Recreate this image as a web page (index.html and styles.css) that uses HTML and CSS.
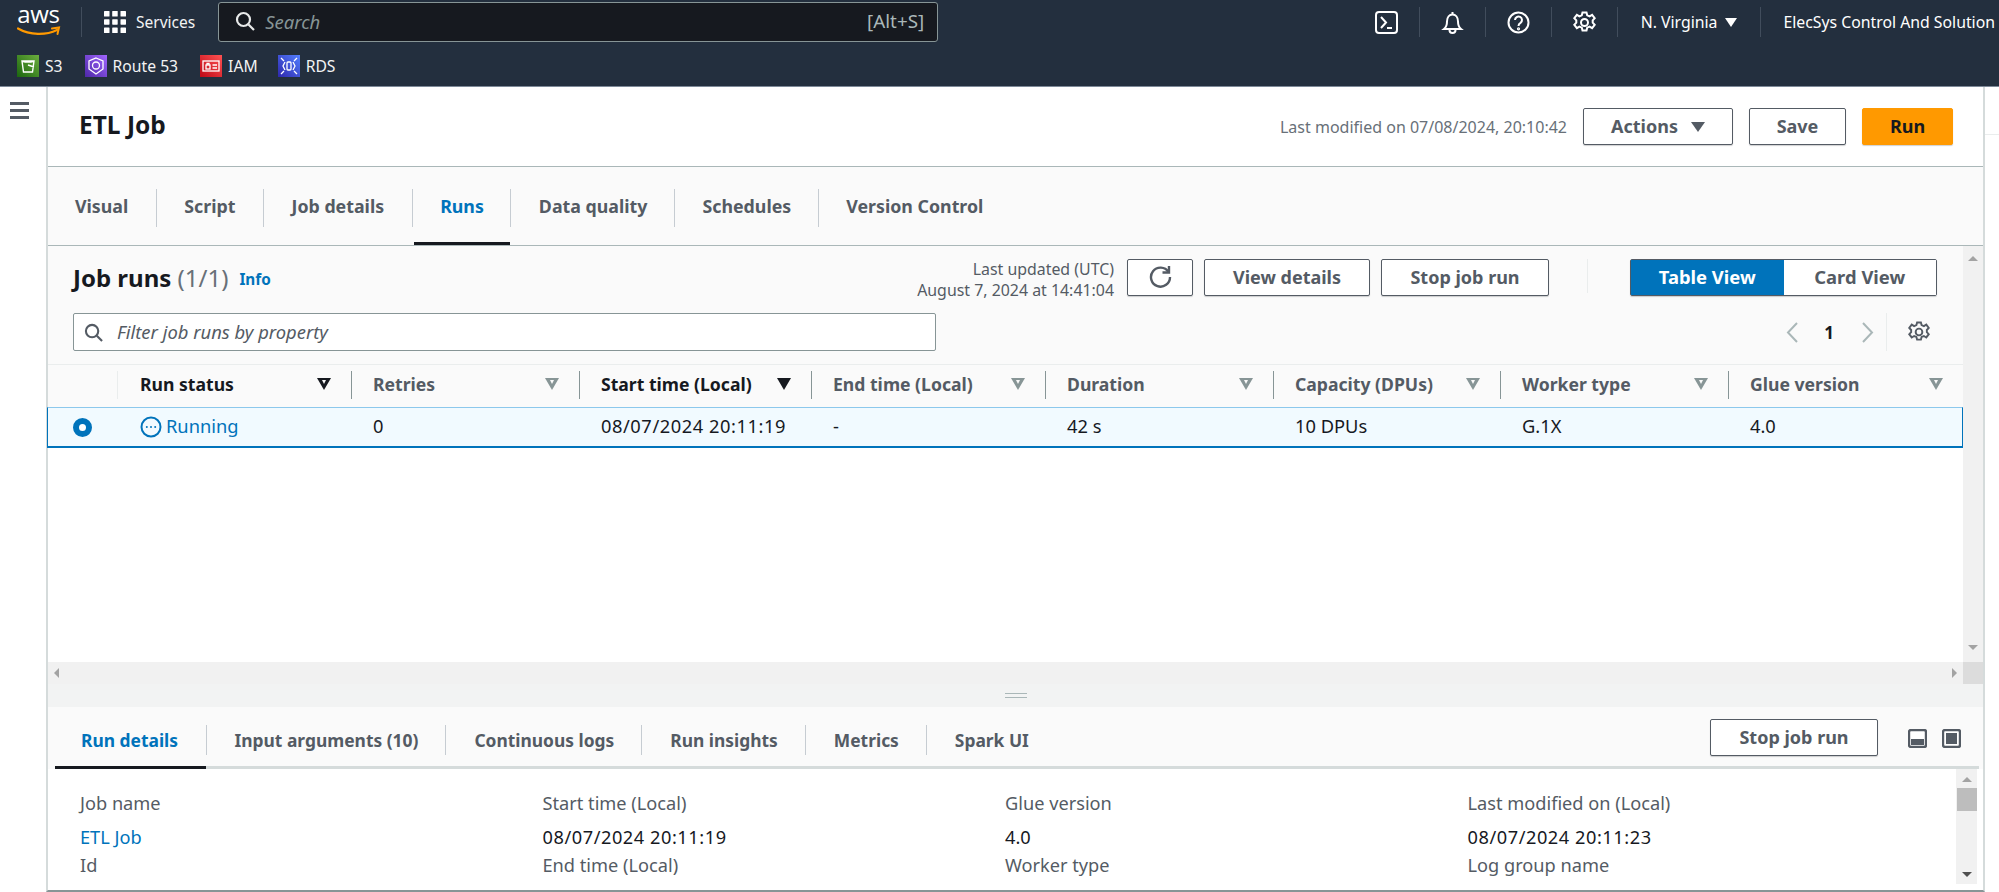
FILE: index.html
```html
<!DOCTYPE html>
<html lang="en">
<head>
<meta charset="utf-8">
<title>ETL Job</title>
<link rel="stylesheet" href="styles.css">
</head>
<body>
<header class="nav">
  <div class="nav-top">
    <div class="logo"><span class="logo-text">aws</span>
      <svg class="logo-smile" width="44" height="12" viewBox="0 0 44 12"><path d="M1 2.5C13 9.5 29 9.5 40 4" fill="none" stroke="#f90" stroke-width="2.2" stroke-linecap="round"/><path d="M35 2.5L42 1.5L40.5 8" fill="none" stroke="#f90" stroke-width="2" stroke-linecap="round"/></svg>
    </div>
    <span class="nav-sep nav-sep-logo"></span>
    <svg class="grid-icon" width="22" height="22" viewBox="0 0 22 22" fill="#fff"><rect width="5.5" height="5.5" rx=".6"/><rect x="8.2" width="5.5" height="5.5" rx=".6"/><rect x="16.5" width="5.5" height="5.5" rx=".6"/><rect y="8.2" width="5.5" height="5.5" rx=".6"/><rect x="8.2" y="8.2" width="5.5" height="5.5" rx=".6"/><rect x="16.5" y="8.2" width="5.5" height="5.5" rx=".6"/><rect y="16.5" width="5.5" height="5.5" rx=".6"/><rect x="8.2" y="16.5" width="5.5" height="5.5" rx=".6"/><rect x="16.5" y="16.5" width="5.5" height="5.5" rx=".6"/></svg>
    <span class="services">Services</span>
    <div class="search">
      <svg width="20" height="20" viewBox="0 0 20 20" fill="none" stroke="#e8eaea" stroke-width="2.2"><circle cx="8.5" cy="8.5" r="6.5"/><path d="M13.5 13.5L19 19"/></svg>
      <span class="search-text">Search</span>
      <span class="search-key">[Alt+S]</span>
    </div>
    <div class="nav-right">
      <svg class="ni ni-term" width="23" height="23" viewBox="0 0 23 23" fill="none" stroke="#fff" stroke-width="2"><rect x="1" y="1" width="21" height="21" rx="3"/><path d="M6 6l5 5.5-5 5.5M12 17h5"/></svg>
      <span class="nav-sep"></span>
      <svg class="ni" width="23" height="23" viewBox="0 0 23 23" fill="none" stroke="#fff" stroke-width="2"><path d="M3 18c2.5-2 3-4 3-7.500C6 6 8.500 3.500 11.500 3.500S17 6 17 10.500c0 3.500.5 5.500 3 7.500z"/><path d="M11.500 1v2.500M8.500 19a3 3 0 0 0 6 0"/></svg>
      <span class="nav-sep"></span>
      <svg class="ni" width="23" height="23" viewBox="0 0 23 23" fill="none" stroke="#fff" stroke-width="2"><circle cx="11.500" cy="11.500" r="10"/><path d="M8 9a3.500 3.500 0 1 1 5.500 2.900c-1.300.8-2 1.300-2 3"/><circle cx="11.500" cy="17.800" r=".6"/></svg>
      <span class="nav-sep"></span>
      <svg class="ni" width="23" height="23" viewBox="0 0 23 23" fill="none" stroke="#fff" stroke-width="2"><path d="M9.500 1.500h4l.7 2.800 2.400 1 2.500-1.500 2.600 3.400-2 2.200v2.200l2 2.200-2.600 3.400-2.500-1.500-2.400 1-.7 2.800h-4l-.7-2.800-2.400-1-2.500 1.500-2.600-3.400 2-2.200V9.400l-2-2.200 2.600-3.400 2.500 1.500 2.400-1z"/><circle cx="11.500" cy="11.500" r="3.500"/></svg>
      <span class="nav-sep"></span>
      <span class="region">N. Virginia</span><span class="caret-w"></span>
      <span class="nav-sep"></span>
      <span class="account">ElecSys Control And Solution</span>
    </div>
  </div>
  <div class="nav-bookmarks">
    <span class="bm"><svg class="bm-ic bm-g" viewBox="0 0 22 22" fill="none" stroke="#fff" stroke-width="1.400"><path d="M5 6h12l-1.500 11h-9zM5 6c0 1.500 12 1.500 12 0M11 10l6 2"/></svg>S3</span>
    <span class="bm"><svg class="bm-ic bm-p" viewBox="0 0 22 22" fill="none" stroke="#fff" stroke-width="1.300"><path d="M11 3l7 3v8l-7 5-7-5V6z"/><circle cx="11" cy="10.500" r="3.500"/></svg>Route 53</span>
    <span class="bm bm-tight"><svg class="bm-ic bm-r" viewBox="0 0 22 22" fill="none" stroke="#fff" stroke-width="1.300"><rect x="3" y="6" width="16" height="10"/><rect x="6" y="10" width="4" height="4"/><path d="M7 10V8.500h2V10M12.500 10H17M12.500 13H17"/></svg>IAM</span>
    <span class="bm"><svg class="bm-ic bm-b" viewBox="0 0 22 22" fill="none" stroke="#fff" stroke-width="1.300"><rect x="9" y="7" width="4" height="8" rx="1"/><path d="M7 7l-2 4 2 4M15 7l2 4-2 4M3 3l3 3M19 3l-3 3M3 19l3-3M19 19l-3-3"/></svg>RDS</span>
  </div>
</header>

<div class="shell">
  <aside class="side">
    <div class="burger"><i></i><i></i><i></i></div>
  </aside>
  <main class="panel">
    <div class="head">
      <h1>ETL Job</h1>
      <span class="modified">Last modified on 07/08/2024, 20:10:42</span>
      <button class="btn btn-actions">Actions<span class="caret-d"></span></button>
      <button class="btn btn-save">Save</button>
      <button class="btn btn-run">Run</button>
    </div>
    <nav class="tabs">
      <span class="tab">Visual</span>
      <span class="tab">Script</span>
      <span class="tab">Job details</span>
      <span class="tab tab-on">Runs</span>
      <span class="tab">Data quality</span>
      <span class="tab">Schedules</span>
      <span class="tab tab-last">Version Control</span>
    </nav>
    <div class="runs-wrap">
      <section class="runs">
        <div class="runs-head">
          <h2>Job runs <span class="count">(1/1)</span></h2>
          <a class="info">Info</a>
          <div class="updated">Last updated (UTC)<br>August 7, 2024 at 14:41:04</div>
          <button class="btn btn-refresh"><svg width="25" height="25" viewBox="0 0 25 25" fill="none" stroke="#545b64" stroke-width="2.400"><path d="M20.500 8A9.500 9.500 0 1 0 22 13"/><path d="M21 2v6.500h-6.500"/></svg></button>
          <button class="btn btn-view">View details</button>
          <button class="btn btn-stop">Stop job run</button>
          <span class="vsep"></span>
          <div class="seg"><span class="seg-on">Table View</span><span class="seg-off">Card View</span></div>
        </div>
        <div class="filter-row">
          <div class="filter">
            <svg width="19" height="19" viewBox="0 0 20 20" fill="none" stroke="#545b64" stroke-width="2.200"><circle cx="8.500" cy="8.500" r="6.500"/><path d="M13.500 13.500L19 19"/></svg>
            <span>Filter job runs by property</span>
          </div>
          <div class="pager">
            <svg width="13" height="23" viewBox="0 0 13 23" fill="none" stroke="#aab7b8" stroke-width="2"><path d="M11 2L2 11.500 11 21"/></svg>
            <b>1</b>
            <svg width="13" height="23" viewBox="0 0 13 23" fill="none" stroke="#aab7b8" stroke-width="2"><path d="M2 2l9 9.500L2 21"/></svg>
            <span class="pager-sep"></span>
            <svg width="22" height="24" viewBox="0 0 23 23" fill="none" stroke="#545b64" stroke-width="2"><path d="M9.500 1.500h4l.7 2.800 2.400 1 2.500-1.500 2.600 3.400-2 2.200v2.200l2 2.200-2.600 3.400-2.500-1.500-2.400 1-.7 2.800h-4l-.7-2.800-2.400-1-2.500 1.500-2.600-3.400 2-2.200V9.400l-2-2.200 2.600-3.400 2.500 1.500 2.400-1z"/><circle cx="11.500" cy="11.500" r="3.500"/></svg>
          </div>
        </div>
        <div class="thead">
          <div class="th th-sel"></div>
          <div class="th th-strong th-run">Run status<span class="sort sort-d"></span></div>
          <div class="th">Retries<span class="sort"></span></div>
          <div class="th th-strong">Start time (Local)<span class="sort sort-f"></span></div>
          <div class="th">End time (Local)<span class="sort"></span></div>
          <div class="th">Duration<span class="sort"></span></div>
          <div class="th">Capacity (DPUs)<span class="sort"></span></div>
          <div class="th">Worker type<span class="sort"></span></div>
          <div class="th th-end">Glue version<span class="sort"></span></div>
        </div>
        <div class="trow">
          <div class="td td-sel"><span class="radio"></span></div>
          <div class="td td-status"><svg width="22" height="22" viewBox="0 0 22 22" fill="none" stroke="#0073bb" stroke-width="2"><circle cx="11" cy="11" r="9.500"/><circle cx="6.800" cy="11" r="1" fill="#0073bb" stroke="none"/><circle cx="11" cy="11" r="1" fill="#0073bb" stroke="none"/><circle cx="15.200" cy="11" r="1" fill="#0073bb" stroke="none"/></svg>Running</div>
          <div class="td">0</div>
          <div class="td td-date">08/07/2024 20:11:19</div>
          <div class="td">-</div>
          <div class="td">42 s</div>
          <div class="td">10 DPUs</div>
          <div class="td">G.1X</div>
          <div class="td">4.0</div>
        </div>
        <div class="tblank"></div>
        <div class="hscroll"><span class="arr-l"></span><span class="arr-r"></span></div>
      </section>
      <div class="vscroll"><span class="arr-u"></span><span class="vfill"></span><span class="arr-dn"></span><span class="corner"></span></div>
    </div>
    <div class="splitter"><i></i><i></i></div>
    <div class="btabs">
      <span class="btab btab-on">Run details</span>
      <span class="btab">Input arguments (10)</span>
      <span class="btab">Continuous logs</span>
      <span class="btab">Run insights</span>
      <span class="btab">Metrics</span>
      <span class="btab btab-last">Spark UI</span>
      <button class="btn btn-stop2">Stop job run</button>
      <svg class="pane-ic" width="19" height="19" viewBox="0 0 19 19"><rect x="1" y="1" width="17" height="17" rx="2" fill="#fff" stroke="#545b64" stroke-width="2.400"/><rect x="3" y="10" width="13" height="6" fill="#545b64"/></svg>
      <svg class="pane-ic pane-ic2" width="19" height="19" viewBox="0 0 19 19"><rect x="1" y="1" width="17" height="17" rx="2" fill="#fff" stroke="#545b64" stroke-width="2.400"/><rect x="4" y="4" width="11" height="11" fill="#545b64"/></svg>
    </div>
    <div class="details">
      <div class="dgrid">
        <div class="dl">Job name</div><div class="dl">Start time (Local)</div><div class="dl">Glue version</div><div class="dl">Last modified on (Local)</div>
        <a class="dv dv-link">ETL Job</a><div class="dv dv-date">08/07/2024 20:11:19</div><div class="dv">4.0</div><div class="dv dv-date">08/07/2024 20:11:23</div>
        <div class="dl">Id</div><div class="dl">End time (Local)</div><div class="dl">Worker type</div><div class="dl">Log group name</div>
      </div>
      <div class="dscroll"><span class="arr-u"></span><span class="dthumb"></span><span class="dtrack"></span><span class="arr-dn arr-dk"></span></div>
    </div>
  </main>
  <div class="rail"><div class="rail-top"></div></div>
</div>
</body>
</html>
```
FILE: styles.css
```css
* { box-sizing: border-box; }
html, body { margin: 0; padding: 0; }
body {
  width: 1999px; height: 892px; overflow: hidden; background: #fff;
  font-family: "Noto Sans", "Open Sans", sans-serif; font-size: 18px; color: #16191f;
  display: flex; flex-direction: column;
}
button { font-family: inherit; cursor: pointer; }
h1, h2 { margin: 0; }

/* top nav */
.nav { height: 87px; background: #232f3e; border-bottom: 1px solid #7d8998; color: #fff; flex: none; }
.nav-top { height: 44px; display: flex; align-items: center; padding-left: 17px; }
.logo { width: 43px; height: 30px; display: flex; flex-direction: column; align-items: center; margin-top: -8px; }
.logo-text { font-family: "Open Sans", sans-serif; font-size: 24px; line-height: 22px; letter-spacing: -.3px; }
.logo-smile { margin-top: 1px; flex: none; }
.nav-sep { width: 1px; height: 30px; background: #414d5c; flex: none; }
.nav-sep-logo { margin-left: 21px; margin-right: 22px; }
.grid-icon { flex: none; }
.services { margin-left: 10px; font-size: 15.500px; color: #f2f3f3; }
.search {
  margin-left: 23px; width: 720px; height: 40px; background: #16191f; border: 1px solid #879596; border-radius: 3px;
  display: flex; align-items: center; padding: 0 13px 2px 16px; font-size: 18.500px;
}
.search-text { margin-left: 10px; font-style: italic; color: #879596; flex: 1; }
.search-key { color: #aab7b8; font-size: 18.800px; }
.nav-right { margin-left: auto; display: flex; align-items: center; font-size: 15.800px; padding-right: 4px; }
.ni { margin: 0 21px 0 21px; flex: none; }
.ni-term { margin-left: 0; }
.region { margin-left: 23px; white-space: nowrap; }
.caret-w { width: 0; height: 0; margin: 0 23px 0 8px; border-left: 6px solid transparent; border-right: 6px solid transparent; border-top: 9px solid #fff; }
.account { margin-left: 22px; white-space: nowrap; }
.nav-bookmarks { height: 42px; display: flex; align-items: center; padding: 2px 0 0 17px; font-size: 15.700px; color: #f2f3f3; }
.bm { display: flex; align-items: center; margin-right: 22px; }
.bm-tight { margin-right: 20px; }
.bm-ic { width: 22px; height: 22px; margin-right: 6px; flex: none; }
.bm-g { background: linear-gradient(45deg, #1b660f, #6cae3e); }
.bm-p { background: linear-gradient(45deg, #4d27a8, #a166ff); }
.bm-r { background: linear-gradient(45deg, #bd0816, #ff5252); }
.bm-b { background: linear-gradient(45deg, #2e27ad, #527fff); }

/* shell */
.shell { flex: 1; display: flex; min-height: 0; }
.side { width: 46px; flex: none; padding: 15px 0 0 10px; }
.burger i { display: block; width: 19px; height: 3px; background: #545b64; margin-bottom: 4px; }
.panel {
  width: 1939px; flex: none; display: flex; flex-direction: column; min-height: 0;
  border-left: 2px solid #d5dbdb; border-right: 2px solid #d5dbdb; border-bottom: 2px solid #879596;
}
.rail { flex: 1; }
.rail-top { height: 48px; border-bottom: 1px solid #eaeded; }

/* header */
.head { height: 80px; flex: none; display: flex; align-items: center; padding: 0 30px 0 31px; border-bottom: 1px solid #aab7b8; }
.head h1 { font-size: 24.500px; font-weight: 700; flex: none; margin-top: -4px; }
.modified { margin-left: auto; color: #687078; font-size: 16px; margin-right: 16px; white-space: nowrap; }
.btn {
  height: 37px; background: #fff; border: 1px solid #545b64; border-radius: 2px; color: #545b64;
  font-weight: 700; font-size: 18px; padding: 0 0 2px; box-shadow: 0 1px 1px #16191f33; display: inline-flex; align-items: center; justify-content: center;
}
.btn-actions { width: 150px; }
.caret-d { display: inline-block; width: 0; height: 0; margin: 2px 0 0 13px; border-left: 7px solid transparent; border-right: 7px solid transparent; border-top: 10px solid #545b64; }
.btn-save { width: 97px; margin-left: 16px; }
.btn-run { width: 91px; margin-left: 16px; background: #ff9900; border-color: #ff9900; color: #16191f; }

/* tabs */
.tabs { height: 79px; flex: none; display: flex; align-items: flex-start; background: #fafafa; border-bottom: 1px solid #aab7b8; }
.tab {
  font-weight: 700; color: #545b64; font-size: 17.800px; padding: 0 27.500px; height: 78px; line-height: 78px; position: relative; white-space: nowrap;
}
.tab:nth-child(-n+3) { padding-right: 28.500px; }
.tab::after { content: ""; position: absolute; right: 0; top: 22px; height: 38px; width: 1px; background: #c6ccd2; }
.tab:first-child { padding-left: 27px; }
.tab-last::after { display: none; }
.tab-on { color: #0073bb; }
.tab-on::before { content: ""; position: absolute; left: 1px; right: 1px; bottom: 0; height: 3px; background: #16191f; }

/* runs */
.runs-wrap { flex: 1; display: flex; min-height: 0; background: #fafafa; }
.runs { width: 1915px; flex: none; display: flex; flex-direction: column; }
.runs-head { height: 67px; flex: none; display: flex; align-items: flex-start; padding: 13px 0 0 25px; }
.runs-head h2 { font-size: 24px; font-weight: 700; white-space: nowrap; line-height: 37px; }
.count { font-weight: 400; color: #687078; }
.info { color: #0073bb; font-weight: 700; font-size: 15.300px; margin: 10px 0 0 11px; }
.updated { margin-left: auto; text-align: right; color: #545b64; font-size: 15.900px; line-height: 21px; margin-right: 13px; }
.btn-refresh { width: 66px; }
.btn-view { width: 166px; margin-left: 11px; }
.btn-stop { width: 168px; margin-left: 11px; }
.vsep { width: 1px; height: 34px; background: #eaeded; margin: 0 42px 0 38px; }
.seg { width: 307px; height: 37px; display: flex; border: 1px solid #545b64; border-radius: 2px; margin-right: 26px; font-weight: 700; font-size: 18.400px; box-shadow: 0 1px 1px #16191f33; }
.seg span { flex: 1; display: flex; align-items: center; justify-content: center; padding-bottom: 2px; }
.seg-on { background: #0073bb; color: #fff; }
.seg-off { background: #fff; color: #545b64; }
.filter-row { height: 52px; flex: none; display: flex; align-items: flex-start; padding-left: 25px; border-bottom: 1px solid #eaeded; }
.filter {
  width: 863px; height: 38px; background: #fff; border: 1px solid #879596; border-radius: 2px;
  display: flex; align-items: center; padding-left: 10px; font-style: italic; color: #545b64; font-size: 18.400px;
}
.filter span { margin: -2px 0 0 14px; }
.pager { margin-left: auto; display: flex; align-items: center; height: 38px; padding-right: 33px; }
.pager b { margin: 0 27px 0 25px; font-size: 17px; }
.pager-sep { width: 1px; height: 38px; background: #eaeded; margin: 0 21px 0 12px; }

/* table */
.thead { height: 42px; flex: none; display: grid; grid-template-columns: 70px 234px 228px 232px 234px 228px 227px 228px 234px; align-items: center; padding-bottom: 3px; }
.th {
  height: 28px; display: flex; align-items: center; justify-content: space-between; padding: 0 20px 2px 21px; font-weight: 700; color: #545b64; font-size: 17.600px; white-space: nowrap;
  border-right: 1px solid #879596;
}
.th-sel { border-right-color: #eaeded; }
.th-strong { color: #16191f; }
.th-run { padding-left: 22px; }
.th-end { border-right: 0; }
.sort { position: relative; width: 0; height: 0; border-left: 7px solid transparent; border-right: 7px solid transparent; border-top: 12px solid #879596; flex: none; }
.sort::after { content: ""; position: absolute; left: -2.500px; top: -9.500px; width: 0; height: 0; border-left: 2.500px solid transparent; border-right: 2.500px solid transparent; border-top: 4px solid #fafafa; }
.sort-d { border-top-color: #16191f; }
.sort-f { border-top-color: #16191f; border-left-width: 7.500px; border-right-width: 7.500px; }
.sort-f::after { display: none; }
.trow { height: 41px; flex: none; display: grid; grid-template-columns: 70px 234px 228px 232px 234px 228px 227px 228px 234px; align-items: center; background: #f1faff; border: 1px solid #0073bb; border-top-color: #8cc8ec; border-bottom-width: 2px; margin-left: -1px; }
.td { padding: 0 0 3px 21px; font-size: 18.300px; white-space: nowrap; }
.td-date { letter-spacing: .55px; }
.td-sel { padding: 0 0 0 25px; display: flex; }
.radio { width: 19px; height: 19px; border-radius: 50%; border: 6px solid #0073bb; background: #fff; }
.td-status { color: #0073bb; display: flex; align-items: center; gap: 4px; padding-left: 22px; }
.td-status svg { margin-top: 2px; }
.tblank { flex: 1; background: #fff; }
.hscroll { height: 22px; flex: none; background: #f1f1f1; display: flex; align-items: center; justify-content: space-between; padding: 0 6px; }
.arr-l { border-top: 5px solid transparent; border-bottom: 5px solid transparent; border-right: 5px solid #a3a3a3; }
.arr-r { border-top: 5px solid transparent; border-bottom: 5px solid transparent; border-left: 5px solid #a3a3a3; }
.vscroll { flex: 1; background: #f1f1f1; display: flex; flex-direction: column; align-items: center; padding-top: 10px; }
.vfill { flex: 1; }
.arr-u { border-left: 5px solid transparent; border-right: 5px solid transparent; border-bottom: 5px solid #a3a3a3; flex: none; }
.arr-dn { border-left: 5px solid transparent; border-right: 5px solid transparent; border-top: 5px solid #a3a3a3; flex: none; margin-bottom: 6px; }
.arr-dk { border-top-color: #505050; margin-bottom: 0; }
.corner { width: 100%; height: 22px; background: #dcdcdc; flex: none; margin-top: 6px; }

/* splitter */
.splitter { height: 23px; flex: none; background: #f2f3f3; display: flex; flex-direction: column; align-items: center; justify-content: center; gap: 3px; }
.splitter i { width: 22px; height: 1px; background: #aab7b8; display: block; }

/* bottom tabs */
.btabs { height: 62px; flex: none; display: flex; align-items: flex-start; background: #fafafa; padding-left: 7px; padding-right: 22px; position: relative; }
.btabs::after { content: ""; position: absolute; left: 7px; right: 4px; bottom: 0; height: 3px; background: #d5dbdb; }
.btab { font-weight: 700; color: #545b64; font-size: 17.400px; padding: 0 28px; height: 60px; line-height: 66px; position: relative; z-index: 1; white-space: nowrap; }
.btab::after { content: ""; position: absolute; right: 0; top: 18px; height: 30px; width: 1px; background: #c6ccd2; }
.btab-last::after { display: none; }
.btab-on { color: #0073bb; padding: 0 28.500px 0 26px; z-index: 2; height: 62px; }
.btab-on::before { content: ""; position: absolute; left: 0; right: 1px; bottom: 0; height: 3px; background: #16191f; }
.btn-stop2 { width: 168px; margin-left: auto; margin-top: 12px; }
.pane-ic { margin: 22px 0 0 30px; flex: none; }
.pane-ic2 { margin-left: 15px; }

/* details */
.details { height: 121px; flex: none; display: flex; background: #fff; min-height: 0; padding-right: 6px; }
.dgrid { flex: 1; padding: 23px 0 0 32px; display: grid; grid-template-columns: repeat(4, 462.500px); grid-auto-rows: min-content; font-size: 18.200px; }
.dl { color: #545b64; height: 34px; line-height: 22px; white-space: nowrap; }
.dv { height: 28px; line-height: 22px; color: #16191f; white-space: nowrap; }
.dv-date { letter-spacing: .55px; }
.dv-link { color: #0073bb; }
.dscroll { width: 21px; flex: none; background: #f1f1f1; margin-bottom: 6px; display: flex; flex-direction: column; align-items: center; padding: 8px 0 7px; }
.dthumb { width: 20px; height: 23px; background: #bdbdbd; margin-top: 6px; flex: none; }
.dtrack { flex: 1; }
```
